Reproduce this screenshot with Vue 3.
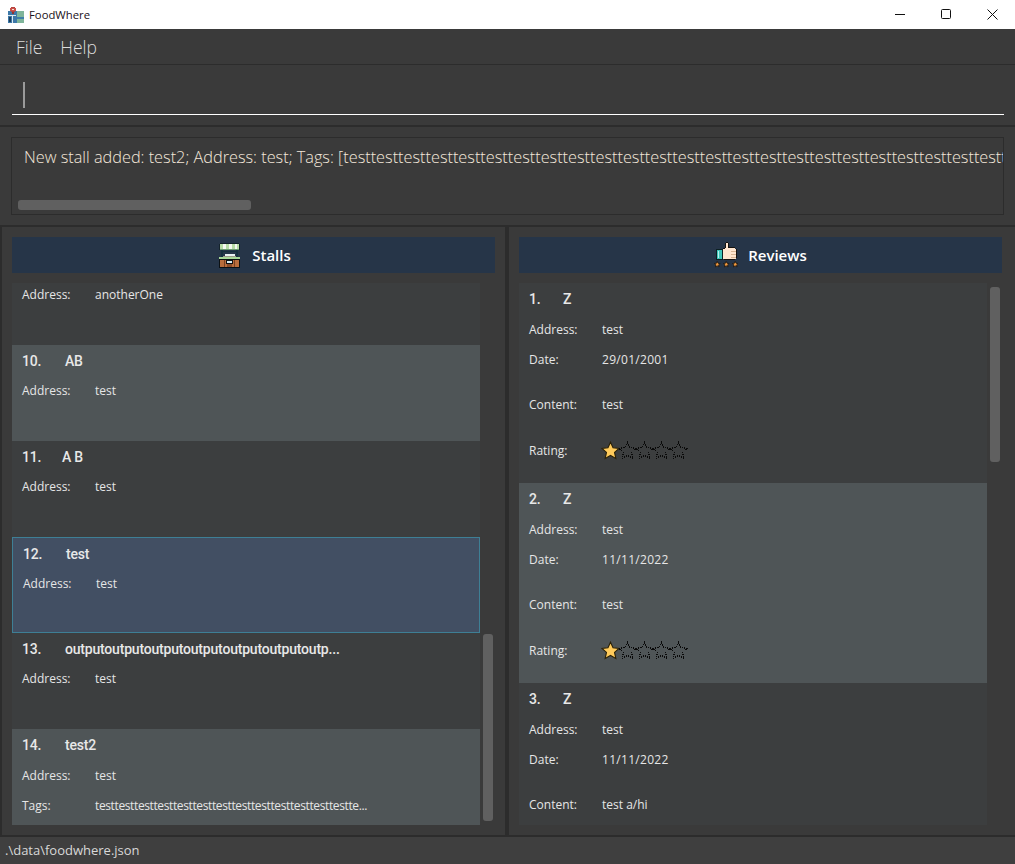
<script setup>
const stalls = [
  { id: 10, name: 'AB', gap: 43, address: 'test', alt: true },
  { id: 11, name: 'A B', gap: 40, address: 'test' },
  { id: 12, name: 'test', gap: 43, address: 'test', selected: true },
  { id: 13, name: 'outputoutputoutputoutputoutputoutputoutp...', gap: 43, address: 'test' },
  { id: 14, name: 'test2', gap: 43, address: 'test', alt: true, tags: 'testtesttesttesttesttesttesttesttesttesttesttesttestte...' },
]
const reviews = [
  { id: 1, date: '29/01/2001', content: 'test' },
  { id: 2, date: '11/11/2022', content: 'test', alt: true },
  { id: 3, date: '11/11/2022', content: 'test a/hi', clipped: true },
]
const longText = 'New stall added: test2; Address: test; Tags: [' + 'test'.repeat(60)
const empties = [1, 2, 3, 4]
const starPath = 'M12 1.5l3.2 7 7.6.8-5.7 5.1 1.6 7.6L12 18.2 5.3 22l1.6-7.6L1.2 9.3l7.6-.8z'
const stallPixels = [
  [1,0,19,1,'#14232b'],[1,1,19,5,'#f4f9f0'],[1,1,3,5,'#b7dca6'],[7,1,3,5,'#b7dca6'],[13,1,3,5,'#b7dca6'],[18,1,2,5,'#b7dca6'],
  [0,1,1,6,'#14232b'],[20,1,1,6,'#14232b'],[1,6,19,1,'#6f9f72'],[2,7,2,8,'#16303f'],[17,7,2,8,'#16303f'],[4,8,13,1,'#16303f'],
  [6,11,10,2,'#e9f2f3'],[4,13,13,1,'#9a9a8a'],[0,14,21,2,'#a7d899'],[0,16,21,1,'#0c1114'],
  [1,17,19,7,'#b96d3c'],[0,17,1,8,'#0c1114'],[20,17,1,8,'#0c1114'],[0,24,21,1,'#0c1114'],
  [7,17,7,4,'#0c1114'],[8,18,5,2,'#dff1f6'],[5,17,1,7,'#7a4122'],[15,17,1,7,'#7a4122'],[8,21,5,3,'#8a4c29'],
]
const thumbPixels = [
  [12,0,2,1,'#17130f'],[11,1,1,6,'#17130f'],[14,1,1,5,'#17130f'],[12,1,2,6,'#ffe6cf'],
  [9,6,2,1,'#17130f'],[15,5,6,1,'#17130f'],[9,7,13,10,'#ffe6cf'],[11,6,10,1,'#ffe6cf'],[22,7,1,9,'#17130f'],
  [17,9,5,1,'#d9b593'],[17,12,5,1,'#d9b593'],[17,15,5,1,'#d9b593'],[10,17,11,1,'#17130f'],
  [2,7,7,11,'#0c2022'],[3,8,5,9,'#3ec4b8'],[4,9,1,7,'#bdf3ee'],
]
const starSpots = [0, 9, 18]
</script>

<template>
  <div class="window">
    <header class="titlebar">
      <svg class="app-icon" width="16" height="16" viewBox="0 0 16 16" shape-rendering="crispEdges" aria-hidden="true">
        <rect x="0" y="4" width="16" height="12" fill="#3d78a8" />
        <rect x="9" y="4" width="7" height="12" fill="#7fb59a" />
        <rect x="0" y="8" width="8" height="1" fill="#dbe9f2" />
        <rect x="4" y="9" width="1" height="7" fill="#dbe9f2" />
        <rect x="1" y="10" width="2" height="5" fill="#1d3f5c" />
        <rect x="9" y="10" width="7" height="2" fill="#3f7fa8" />
        <rect x="3" y="0" width="4" height="1" fill="#b5443f" />
        <rect x="2" y="1" width="6" height="3" fill="#c9504a" />
        <rect x="4" y="2" width="2" height="1" fill="#f4e4d4" />
        <rect x="3" y="4" width="4" height="1" fill="#b5443f" />
        <rect x="4" y="5" width="2" height="2" fill="#8f3531" />
      </svg>
      <span class="app-title">FoodWhere</span>
      <div class="win-controls">
        <svg width="11" height="11" viewBox="0 0 11 11" aria-hidden="true"><path d="M0 5.5H10" stroke="#111" fill="none" /></svg>
        <svg width="11" height="11" viewBox="0 0 11 11" aria-hidden="true"><rect x=".5" y=".5" width="9" height="9" rx="1" stroke="#111" fill="none" /></svg>
        <svg width="11" height="11" viewBox="0 0 11 11" aria-hidden="true"><path d="M.5 .5L10.5 10.5M10.5 .5L.5 10.5" stroke="#111" fill="none" /></svg>
      </div>
    </header>

    <nav class="menubar"><span>File</span><span>Help</span></nav>

    <section class="command-pane">
      <div class="command-field"><span class="caret"></span></div>
    </section>

    <section class="result-pane">
      <div class="result-box">
        <div class="result-text">{{ longText }}</div>
        <div class="hscroll"></div>
      </div>
    </section>

    <main class="lists">
      <section class="col col-left">
        <div class="col-head head-stalls">
          <svg width="21" height="25" viewBox="0 0 21 25" shape-rendering="crispEdges" aria-hidden="true">
            <rect v-for="(p, i) in stallPixels" :key="i" :x="p[0]" :y="p[1]" :width="p[2]" :height="p[3]" :fill="p[4]" />
          </svg>
          <span>Stalls</span>
        </div>
        <div class="col-body">
          <div class="list">
            <article class="card card-partial">
              <div class="row"><span class="label">Address:</span><span class="value">anotherOne</span></div>
            </article>
            <article v-for="s in stalls" :key="s.id" class="card" :class="{ alt: s.alt, selected: s.selected, tagged: s.tags }">
              <div class="card-title"><span class="num" :style="{ width: s.gap + 'px' }">{{ s.id }}.</span><span>{{ s.name }}</span></div>
              <div class="row first-row"><span class="label">Address:</span><span class="value">{{ s.address }}</span></div>
              <div v-if="s.tags" class="row"><span class="label">Tags:</span><span class="value tags">{{ s.tags }}</span></div>
            </article>
          </div>
          <div class="vtrack"><div class="vthumb stall-thumb"></div></div>
        </div>
      </section>

      <section class="col col-right">
        <div class="col-head head-reviews">
          <svg width="24" height="26" viewBox="0 0 24 26" aria-hidden="true">
            <g shape-rendering="crispEdges">
              <rect v-for="(p, i) in thumbPixels" :key="i" :x="p[0]" :y="p[1]" :width="p[2]" :height="p[3]" :fill="p[4]" />
            </g>
            <path v-for="x in starSpots" :key="x" :transform="`translate(${x} 19) scale(.27)`" :d="starPath" fill="#f29a3f" stroke="#17130f" stroke-width="3" />
          </svg>
          <span>Reviews</span>
        </div>
        <div class="col-body">
          <div class="list">
            <article v-for="r in reviews" :key="r.id" class="review" :class="{ alt: r.alt, clipped: r.clipped }">
              <div class="card-title"><span class="num review-num">{{ r.id }}.</span><span>Z</span></div>
              <div class="row review-first"><span class="label">Address:</span><span class="value">test</span></div>
              <div class="row"><span class="label">Date:</span><span class="value date">{{ r.date }}</span></div>
              <div class="row content-row"><span class="label">Content:</span><span class="value">{{ r.content }}</span></div>
              <div v-if="!r.clipped" class="row rating-row">
                <span class="label">Rating:</span>
                <span class="stars">
                  <svg width="19" height="19" viewBox="0 0 24 24" aria-hidden="true"><path :d="starPath" fill="#ffcb5c" stroke="#2b2108" stroke-width="1.4" /></svg>
                  <svg v-for="e in empties" :key="e" width="19" height="19" viewBox="0 0 24 24" shape-rendering="crispEdges" aria-hidden="true"><path :d="starPath" fill="none" stroke="#0a0a0a" stroke-width="1.5" stroke-dasharray="1.6 1.2" /></svg>
                </span>
              </div>
            </article>
          </div>
          <div class="vtrack"><div class="vthumb review-thumb"></div></div>
        </div>
      </section>
    </main>

    <footer class="statusbar">.\data\foodwhere.json</footer>
  </div>
</template>

<style>
html, body { margin: 0; background: #3a3a3a; overflow: hidden; }
</style>

<style scoped>
.window {
  width: 1015px;
  height: 864px;
  display: flex;
  flex-direction: column;
  background: #3a3a3a;
  font-family: "Open Sans", "Noto Sans", sans-serif;
  color: #fff;
  overflow: hidden;
}
.titlebar {
  height: 29px;
  flex: none;
  background: #fff;
  display: flex;
  align-items: center;
  padding-left: 8px;
  box-sizing: border-box;
}
.app-icon { margin-right: 5px; }
.app-title { color: #1a1020; font-size: 11.3px; }
.win-controls {
  margin-left: auto;
  display: flex;
  align-items: center;
  gap: 35px;
  padding-right: 17px;
}
.menubar {
  height: 36px;
  flex: none;
  box-sizing: border-box;
  border-bottom: 1px solid #2c2c2c;
  display: flex;
  align-items: center;
  gap: 18px;
  padding-left: 16px;
  font-size: 17.5px;
  font-weight: 300;
  color: #dcdcdc;
}
.command-pane {
  height: 62px;
  flex: none;
  box-sizing: border-box;
  border-bottom: 2px solid #2c2c2c;
  padding: 0 11px 0 12px;
}
.command-field {
  height: 50px;
  box-sizing: border-box;
  border-bottom: 1px solid #fff;
  display: flex;
  align-items: center;
  padding: 11px 0 0 11px;
}
.caret { width: 2px; height: 26px; background: #9a9a9a; }
.result-pane {
  height: 100px;
  flex: none;
  box-sizing: border-box;
  border-bottom: 2px solid #2c2c2c;
  padding: 10px 11px 0;
}
.result-box {
  height: 78px;
  box-sizing: border-box;
  border: 1px solid #2c2c2c;
  display: flex;
  flex-direction: column;
  overflow: hidden;
}
.result-text {
  white-space: nowrap;
  overflow: hidden;
  padding: 8px 0 0 12px;
  font-size: 16.3px;
  font-weight: 300;
  line-height: 22px;
  color: #f4e8da;
}
.hscroll {
  width: 233px;
  height: 10px;
  flex: none;
  margin: 32px 0 0 6px;
  background: #606060;
  border-radius: 3px;
}
.lists { flex: 1; min-height: 0; display: flex; border-left: 2px solid #2c2c2c; }
.col { display: flex; flex-direction: column; box-sizing: border-box; padding: 10px 0; min-width: 0; }
.col-left { flex: none; padding-left: 10px; padding-right: 10px; border-right: 4px solid #2c2c2c; box-sizing: content-box; width: 483px; }
.col-right { flex: 1; padding-left: 10px; padding-right: 13px; }
.col-head {
  height: 36px;
  flex: none;
  background: #263548;
  display: flex;
  align-items: center;
  justify-content: center;
  font-size: 15px;
  font-weight: 600;
  margin-bottom: 10px;
}
.head-stalls { gap: 12px; padding-left: 3px; }
.head-reviews { gap: 10px; }
.col-body { flex: 1; min-height: 0; display: flex; }
.list { flex: 1; min-width: 0; overflow: hidden; background: #3c3e3f; }
.vtrack { width: 15px; flex: none; position: relative; }
.vthumb { position: absolute; left: 3px; width: 10px; background: #606060; border-radius: 3px; }
.stall-thumb { top: 351px; height: 187px; }
.review-thumb { top: 4px; height: 175px; }
.card {
  height: 96px;
  box-sizing: border-box;
  padding: 5px 10px 0;
  background: #3c3e3f;
}
.card-partial { height: 62px; padding-top: 0; }
.card-partial .row { height: 22px; }
.card.alt, .review.alt { background: #4f5557; }
.card.selected { background: #424f63; border: 1px solid #3e7f95; padding: 5px 10px 0; }
.card-title {
  display: flex;
  align-items: center;
  height: 22px;
  font-family: Roboto, "Open Sans", sans-serif;
  font-size: 14px;
  font-weight: 500;
  letter-spacing: -.2px;
  color: #e8e8e8;
}
.num { flex: none; }
.review-num { width: 34px; }
.row {
  display: flex;
  align-items: center;
  height: 30px;
  font-size: 12px;
  color: #e6e6e6;
}
.first-row { margin-top: 3px; }
.card.tagged .first-row, .review-first { margin-top: 4px; }
.label { width: 73px; flex: none; }
.value { white-space: nowrap; }
.tags { letter-spacing: -.38px; }
.date { letter-spacing: .3px; }
.review {
  height: 200px;
  box-sizing: border-box;
  padding: 5px 10px 0;
  background: #3c3e3f;
}
.review.clipped { height: 142px; overflow: hidden; }
.content-row { margin-top: 15px; }
.rating-row { margin-top: 16px; }
.stars { display: flex; margin-left: -1px; }
.stars svg { margin-right: -2px; }
.statusbar {
  height: 29px;
  flex: none;
  box-sizing: border-box;
  border-top: 2px solid #2c2c2c;
  background: #3f3f3f;
  padding-left: 5px;
  font-size: 13px;
  line-height: 27px;
  color: #d8d8d8;
}
</style>
